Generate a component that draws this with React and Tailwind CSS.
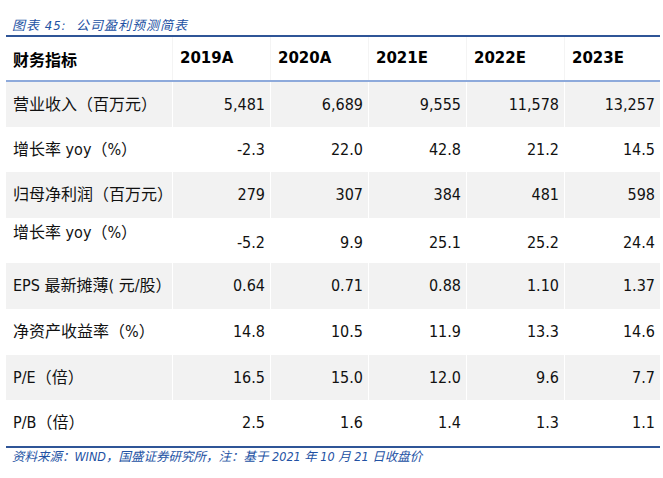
import React from "react";

const YEARS = ["2019A", "2020A", "2021E", "2022E", "2023E"];

const ROWS = [
  { label: "营业收入（百万元）", values: ["5,481", "6,689", "9,555", "11,578", "13,257"], h: "h-[45px]", gray: true },
  { label: "增长率 yoy（%）", values: ["-2.3", "22.0", "42.8", "21.2", "14.5"], h: "h-[45px]" },
  { label: "归母净利润（百万元）", values: ["279", "307", "384", "481", "598"], h: "h-[46px]", gray: true },
  { label: "增长率 yoy（%）", values: ["-5.2", "9.9", "25.1", "25.2", "24.4"], h: "h-[45px]", shifted: true },
  { label: "EPS 最新摊薄( 元/股）", values: ["0.64", "0.71", "0.88", "1.10", "1.37"], h: "h-[46px]", gray: true },
  { label: "净资产收益率（%）", values: ["14.8", "10.5", "11.9", "13.3", "14.6"], h: "h-[46px]" },
  { label: "P/E（倍）", values: ["16.5", "15.0", "12.0", "9.6", "7.7"], h: "h-[45px]", gray: true },
  { label: "P/B（倍）", values: ["2.5", "1.6", "1.4", "1.3", "1.1"], h: "h-[46px]" },
];

const COLS = "grid grid-cols-[166px_98px_98px_98px_98px_96px]";

function Row({ row }) {
  return (
    <div className={`${COLS} ${row.h} ${row.gray ? "bg-[#f2f2f2]" : "bg-white"}`}>
      <div
        className={`flex items-center pl-[7px] text-[16px] leading-[24px] text-[#111] font-[family-name:'DejaVu_Sans_Condensed','Noto_Sans_CJK_SC',sans-serif] ${row.shifted ? "pb-[16px]" : ""}`}
      >
        {row.label}
      </div>
      {row.values.map((v, i) => (
        <div
          key={i}
          className={`flex items-center justify-end pr-[5px] text-[16px] leading-[24px] text-[#111] font-[family-name:'DejaVu_Sans_Condensed','DejaVu_Sans',sans-serif] ${row.gray ? "border-l border-white" : ""} ${row.shifted ? "pt-[4px]" : ""}`}
        >
          {v}
        </div>
      ))}
    </div>
  );
}

export default function App() {
  return (
    <div className="w-[663px] h-[478px] bg-white pl-[6px]">
      <div className="w-[654px]">
        <div className="h-[35px] flex items-end pl-[6px] pb-[1px] text-[13px] leading-[17px] italic tracking-[1px] text-[#2251a3] font-[family-name:'DejaVu_Sans_Condensed','Noto_Sans_CJK_SC',sans-serif]">
          图表 45:&nbsp; 公司盈利预测简表
        </div>
        <div className="border-t-2 border-[#2f5597]">
          <div className={`${COLS} h-[45px] border-b-2 border-[#8eaadb]`}>
            <div className="flex items-center pl-[7px] text-[16px] font-bold text-black font-[family-name:'Noto_Sans_CJK_SC',sans-serif]">
              财务指标
            </div>
            {YEARS.map((y) => (
              <div
                key={y}
                className="flex items-center pl-[7px] text-[15px] font-bold text-black border-l border-[#f4f4f4] font-[family-name:'DejaVu_Sans',sans-serif]"
              >
                {y}
              </div>
            ))}
          </div>
          {ROWS.map((r, i) => (
            <Row key={i} row={r} />
          ))}
        </div>
        <div className="border-t-2 border-[#2f5597] pt-[1px] pl-[6px] text-[12.5px] leading-[16px] italic text-[#2251a3] font-[family-name:'DejaVu_Sans_Condensed','Noto_Sans_CJK_SC',sans-serif]">
          资料来源：WIND，国盛证券研究所，注：基于 2021 年 10 月 21 日收盘价
        </div>
      </div>
    </div>
  );
}
